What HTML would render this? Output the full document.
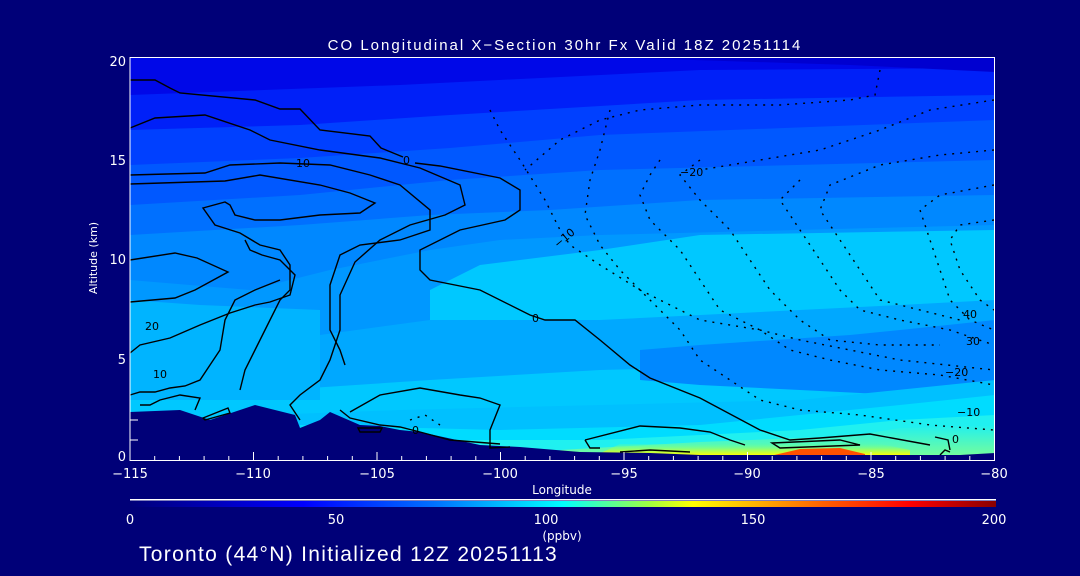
<!DOCTYPE html>
<html><head><meta charset="utf-8"><style>
html,body{margin:0;padding:0;background:#000078;}
svg{display:block}
text{font-family:"DejaVu Sans","Liberation Sans",sans-serif;fill:#fff}
</style></head><body>
<svg width="1080" height="576" viewBox="0 0 1080 576" xmlns="http://www.w3.org/2000/svg">
<defs>
<linearGradient id="cb" x1="0" x2="1" y1="0" y2="0">
<stop offset="0" stop-color="#000078"/>
<stop offset="0.2" stop-color="#0000ff"/>
<stop offset="0.35" stop-color="#0070ff"/>
<stop offset="0.5" stop-color="#00ffff"/>
<stop offset="0.6" stop-color="#a0ff40"/>
<stop offset="0.65" stop-color="#ffff00"/>
<stop offset="0.8" stop-color="#ff6000"/>
<stop offset="0.9" stop-color="#ff0000"/>
<stop offset="1" stop-color="#880000"/>
</linearGradient>
<linearGradient id="hot" x1="0" x2="0" y1="0" y2="1">
<stop offset="0" stop-color="#40ffc0" stop-opacity="0"/>
<stop offset="0.45" stop-color="#a0ff60"/>
<stop offset="0.75" stop-color="#ffff00"/>
<stop offset="1" stop-color="#ffa000"/>
</linearGradient>
<linearGradient id="grn" x1="0" x2="0" y1="0" y2="1">
<stop offset="0" stop-color="#20f0f0"/>
<stop offset="1" stop-color="#80ff90"/>
</linearGradient>
</defs>
<rect width="1080" height="576" fill="#000078"/>
<text x="565" y="50" font-size="15" text-anchor="middle" letter-spacing="2" style="font-family:'Liberation Sans',sans-serif">CO Longitudinal X−Section 30hr  Fx Valid 18Z 20251114</text>
<g>
<rect x="130" y="57" width="865" height="403" fill="#00c8ff"/>
<polygon points="130,400 430,380 600,370 995,360 995,57 130,57" fill="#00a8ff"/>
<polygon points="130,330 320,335 430,320 600,300 995,300 995,57 130,57" fill="#0098ff"/>
<polygon points="430,290 480,265 600,250 700,235 995,230 995,300 900,305 600,320 430,320" fill="#00c8ff"/>
<polygon points="130,280 250,290 330,270 430,250 500,240 600,235 995,225 995,57 130,57" fill="#0088ff"/>
<polygon points="130,235 300,225 430,215 550,210 700,200 995,195 995,57 130,57" fill="#0070ff"/>
<polygon points="130,205 300,195 450,180 600,170 995,160 995,57 130,57" fill="#0058ff"/>
<polygon points="130,165 300,158 450,148 600,135 995,120 995,57 130,57" fill="#0040ff"/>
<polygon points="130,130 300,125 450,115 700,100 995,95 995,57 130,57" fill="#0020f8"/>
<polygon points="130,95 400,85 700,70 995,68 995,57 130,57" fill="#0008e8"/>
<polygon points="600,57 995,57 995,72 850,65" fill="#0000d0"/>
<polygon points="130,300 200,305 320,310 320,400 130,400" fill="#00b4ff"/>
<polygon points="640,350 700,345 850,335 900,330 995,320 995,395 900,395 800,390 700,385 640,380" fill="#0088ff"/>
<polygon points="130,420 400,410 600,405 800,400 995,380 995,460 130,460" fill="#00c0ff"/>
<polygon points="300,425 500,430 700,425 900,405 995,395 995,460 300,460" fill="#00dcff"/>
<polygon points="400,440 600,440 800,430 900,420 995,415 995,460 400,460" fill="#20f0f0"/>
<polygon points="560,450 700,442 850,436 900,428 995,425 995,460 560,460" fill="url(#grn)"/>
<polygon points="590,458 620,444 700,444 800,442 870,442 910,450 910,460 590,460" fill="url(#hot)"/>
<polygon points="770,456 800,449 840,448 865,454 865,458 770,458" fill="#ff5000"/>
<polygon points="130,460 130,412 180,410 210,420 255,405 295,415 300,428 320,420 330,412 360,425 380,426 400,430 420,432 480,445 520,447 580,452 650,453 700,455 800,455 900,455 960,455 995,453 995,460" fill="#000078"/>
</g>
<g fill="none" stroke="#000" stroke-width="1.4">
<path d="M130,80 L155,80 L170,88 L180,93 L255,100 L280,109 L300,109 L320,130 L370,136 L381,148 L403,157"/>
<path d="M415,163 L440,166 L500,178 L520,190 L520,210 L505,220 L460,230 L420,250 L420,270 L430,280 L480,290 L530,315 L545,320 L575,320 L600,340 L630,365 L650,378 L700,398 L760,430 L790,440 L820,438 L870,434 L930,445"/>
<path d="M130,128 L155,118 L205,115 L250,130 L270,140 L320,150 L380,158 L420,168 L460,185 L465,205 L445,215 L410,225 L380,240 L355,262 L340,295 L340,330 L330,360 L320,380 L300,395 L290,405 L300,420"/>
<path d="M130,175 L205,173 L230,165 L280,163 L330,165 L370,175 L400,185 L430,210 L430,230 L400,240 L360,245 L340,255 L330,285 L330,330 L340,350 L345,365"/>
<path d="M130,184 L225,181 L260,175 L320,185 L350,193 L375,203 L360,213 L320,215 L280,220 L255,220 L235,215 L230,205 L225,202 L203,208 L215,225 L240,233 L260,245 L280,250 L290,265 L290,290 L280,300 L270,320 L260,340 L245,370 L240,390"/>
<path d="M130,260 L175,253 L197,258 L228,272 L195,290 L175,298 L130,302"/>
<path d="M130,353 L140,345 L170,338 L200,325 L230,313 L255,305 L270,302 L290,295 L295,275 L280,260 L262,255 L250,250 L245,240"/>
<path d="M130,395 L140,392 L155,392 L170,388 L185,386 L200,380 L210,365 L220,350 L225,320 L235,300 L255,290 L280,280"/>
<path d="M140,405 L150,405 L160,400 L180,395 L200,398 L195,410"/>
<path d="M203,418 L228,408 L230,413 L205,420 Z"/>
<path d="M350,412 L380,395 L420,388 L460,395 L480,398 L500,405 L490,430 L490,448 L510,447"/>
<path d="M340,410 L350,418 L380,425 L400,427 L420,432 L450,440 L500,444"/>
<path d="M358,428 L360,432 L380,432 L382,428 Z"/>
<path d="M585,440 L640,426 L680,428 L710,432 L730,440 L745,445"/>
<path d="M585,440 L590,448 L600,448"/>
<path d="M620,452 L650,450 L690,452"/>
<path d="M772,443 L840,440 L860,445 L780,448 Z"/>
<path d="M935,437 L948,440 L950,450 M940,455 L945,450 L950,452"/>
</g>
<g fill="none" stroke="#000" stroke-width="1.4" stroke-dasharray="2,6">
<path d="M490,110 L500,130 L520,160 L545,200 L560,230 L570,245 L600,265 L640,290 L680,310 L700,320 L760,330 L800,340 L850,350 L900,360 L994,370"/>
<path d="M610,110 L600,150 L590,180 L585,215 L600,245 L620,270 L650,300 L680,330 L700,360 L730,380 L760,400 L800,410 L860,415 L930,425 L994,430"/>
<path d="M660,160 L650,175 L640,195 L650,220 L680,250 L700,280 L720,310 L760,330 L790,350 L830,360 L880,370 L940,375 L994,385"/>
<path d="M880,70 L875,95 L850,100 L780,105 L700,105 L640,110 L600,120 L560,140 L525,170"/>
<path d="M700,160 L680,175 L700,200 L730,230 L750,260 L770,290 L800,320 L830,340 L880,345 L940,345"/>
<path d="M800,180 L780,200 L800,230 L820,260 L840,290 L860,310 L900,320 L950,330 L994,345"/>
<path d="M994,100 L930,110 L880,130 L820,150 L760,160 L700,170"/>
<path d="M994,150 L940,155 L880,165 L830,185 L820,210 L840,240 L860,270 L880,300 L920,310 L960,320"/>
<path d="M994,185 L940,195 L920,210 L930,240 L940,270 L950,300 L970,320 L994,330"/>
<path d="M994,220 L960,225 L950,240 L960,270 L980,300 L994,310"/>
<path d="M410,420 L425,415 L440,425"/>
</g>
<g font-size="11">
<text x="296" y="167" style="fill:#000">10</text>
<text x="403" y="164" style="fill:#000">0</text>
<text x="145" y="330" style="fill:#000">20</text>
<text x="153" y="378" style="fill:#000">10</text>
<text x="532" y="322" style="fill:#000">0</text>
<text x="412" y="434" style="fill:#000">0</text>
<text x="553" y="245" style="fill:#000" transform="rotate(-40 560 240)">−10</text>
<text x="680" y="176" style="fill:#000">−20</text>
<text x="963" y="318" style="fill:#000">40</text>
<text x="966" y="345" style="fill:#000">30</text>
<text x="945" y="376" style="fill:#000">−20</text>
<text x="957" y="416" style="fill:#000">−10</text>
<text x="952" y="443" style="fill:#000">0</text>
</g>
<g stroke="#fff" stroke-width="1" fill="none">
<path d="M130,57.5 H994.5 V460.5 H130 V57"/>
<path d="M130,460 v-8 M154.7,460 v-4 M179.4,460 v-4 M204.1,460 v-4 M228.8,460 v-4 M253.5,460 v-8 M278.2,460 v-4 M302.9,460 v-4 M327.6,460 v-4 M352.3,460 v-4 M377,460 v-8 M401.7,460 v-4 M426.4,460 v-4 M451.1,460 v-4 M475.8,460 v-4 M500.5,460 v-8 M525.2,460 v-4 M549.9,460 v-4 M574.6,460 v-4 M599.3,460 v-4 M624,460 v-8 M648.7,460 v-4 M673.4,460 v-4 M698.1,460 v-4 M722.8,460 v-4 M747.5,460 v-8 M772.2,460 v-4 M796.9,460 v-4 M821.6,460 v-4 M846.3,460 v-4 M871,460 v-8 M895.7,460 v-4 M920.4,460 v-4 M945.1,460 v-4 M969.8,460 v-4"/>
<path d="M130,420 h8 M130,440 h8"/>
</g>
<g font-size="13">
<text x="126" y="66" text-anchor="end">20</text>
<text x="126" y="165" text-anchor="end">15</text>
<text x="126" y="264" text-anchor="end">10</text>
<text x="126" y="364" text-anchor="end">5</text>
<text x="126" y="461" text-anchor="end">0</text>
<text x="130" y="478" text-anchor="middle">−115</text>
<text x="253" y="478" text-anchor="middle">−110</text>
<text x="377" y="478" text-anchor="middle">−105</text>
<text x="500" y="478" text-anchor="middle">−100</text>
<text x="624" y="478" text-anchor="middle">−95</text>
<text x="747" y="478" text-anchor="middle">−90</text>
<text x="871" y="478" text-anchor="middle">−85</text>
<text x="994" y="478" text-anchor="middle">−80</text>
</g>
<text x="562" y="494" font-size="12" text-anchor="middle">Longitude</text>
<text x="97" y="258" font-size="11" text-anchor="middle" transform="rotate(-90 97 258)">Altitude (km)</text>
<rect x="130" y="499" width="866" height="1.5" fill="#fff"/>
<rect x="130" y="501" width="866" height="6" fill="url(#cb)"/>
<g font-size="13">
<text x="130" y="524" text-anchor="middle">0</text>
<text x="336" y="524" text-anchor="middle">50</text>
<text x="546" y="524" text-anchor="middle">100</text>
<text x="753" y="524" text-anchor="middle">150</text>
<text x="994" y="524" text-anchor="middle">200</text>
<text x="562" y="540" text-anchor="middle" font-size="12">(ppbv)</text>
</g>
<text x="139" y="561" font-size="21" letter-spacing="1.3" style="font-family:'Liberation Sans',sans-serif">Toronto (44°N) Initialized 12Z 20251113</text>
</svg>
</body></html>
